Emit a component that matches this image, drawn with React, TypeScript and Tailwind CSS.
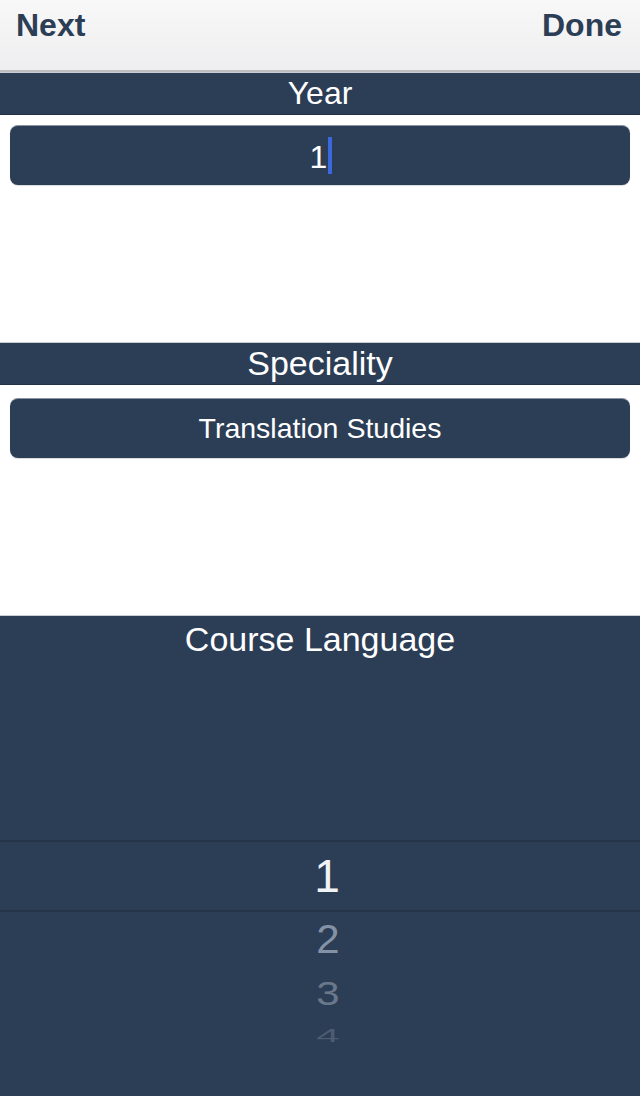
import React from 'react';

const NAVY = 'bg-[#2c3d56]';

const SectionHeader: React.FC<{ title: string; size: string }> = ({ title, size }) => (
  <div className={`h-[43px] shrink-0 ${NAVY} border-t border-[#c9ced6] border-b border-b-[#223146] text-center text-white ${size} leading-[41px]`}>
    {title}
  </div>
);

const FieldBox: React.FC<{ children: React.ReactNode }> = ({ children }) => (
  <div className={`mx-[10px] h-[60px] shrink-0 rounded-lg ${NAVY} border-t border-[#8a93a1] shadow-[0_1px_1px_rgba(0,0,0,0.15)] flex items-center justify-center text-white`}>
    {children}
  </div>
);

const App: React.FC = () => {
  return (
    <div
      className="w-[640px] h-[1096px] flex flex-col bg-white overflow-hidden"
      style={{ fontFamily: '"Liberation Sans", Arial, sans-serif' }}
    >
      {/* Toolbar */}
      <div className="h-[72px] shrink-0 flex justify-between items-start pl-4 pr-[18px] pt-[7px] bg-gradient-to-b from-[#f8f8f8] to-[#eeeef0] border-b-2 border-[#bdbdbd] text-[#2c3d56] text-[32px] font-bold leading-[36px]">
        <span>Next</span>
        <span>Done</span>
      </div>

      {/* Year */}
      <SectionHeader title="Year" size="text-[32px]" />
      <div className="h-[10px] shrink-0" />
      <FieldBox>
        <span className="text-[32px] leading-none pl-[2px] pt-[2px]">1</span>
        <span className="ml-[1px] w-[4px] h-[37px] bg-[#3b68dc]" />
      </FieldBox>
      <div className="h-[157px] shrink-0" />

      {/* Speciality */}
      <SectionHeader title="Speciality" size="text-[34px]" />
      <div className="h-[13px] shrink-0" />
      <FieldBox>
        <span className="text-[28.5px] leading-none">Translation Studies</span>
      </FieldBox>
      <div className="h-[157px] shrink-0" />

      {/* Course Language picker */}
      <div className={`flex-1 flex flex-col ${NAVY} border-t border-[#c9ced6]`}>
        <div className="h-[46px] shrink-0 text-center text-white text-[34px] leading-[46px]">Course Language</div>
        <div className="h-[178px] shrink-0" />
        <div className="h-[72px] shrink-0 border-y-2 border-[#253449] flex items-center justify-center pl-[14px]">
          <span className="text-[46px] leading-none text-[#f2f3f5]">1</span>
        </div>
        <div className="h-[56px] shrink-0 flex items-center justify-center pl-[16px]">
          <span className="text-[42px] leading-none text-[#8592a5] scale-y-[0.95]">2</span>
        </div>
        <div className="h-[52px] shrink-0 flex items-center justify-center pl-[16px]">
          <span className="text-[42px] leading-none text-[#6a788c] scale-y-[0.78]">3</span>
        </div>
        <div className="h-[32px] shrink-0 flex items-center justify-center pl-[16px]">
          <span className="text-[42px] leading-none text-[#4c5c72] scale-y-[0.45]">4</span>
        </div>
      </div>
    </div>
  );
};

export default App;
